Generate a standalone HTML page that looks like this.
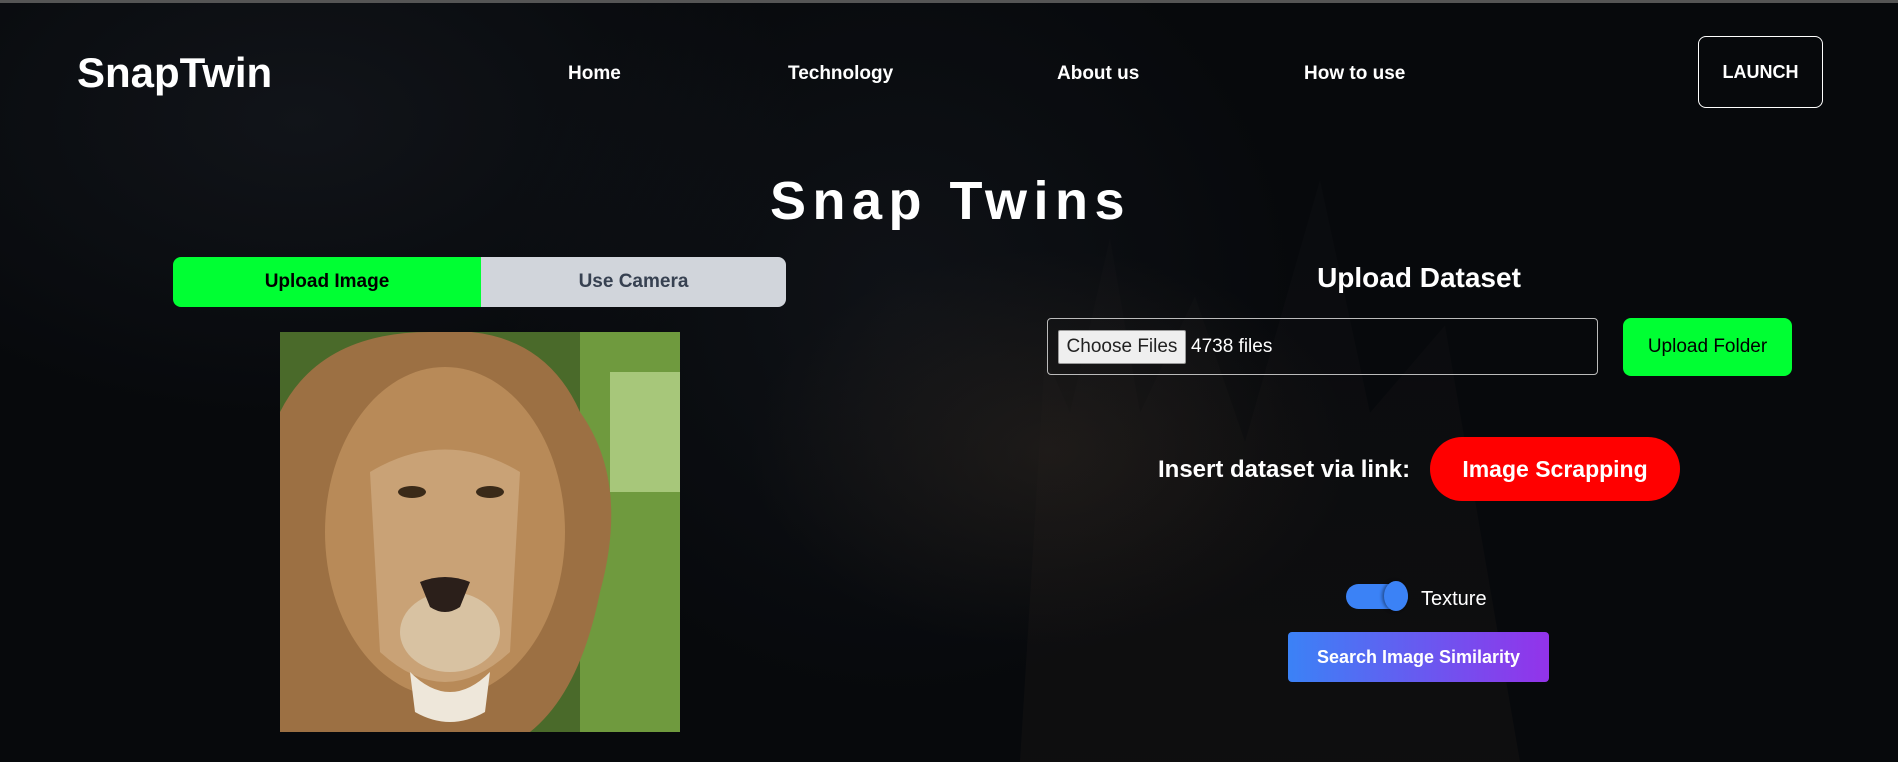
<!DOCTYPE html>
<html><head><meta charset="utf-8"><style>
*{margin:0;padding:0;box-sizing:border-box}
body{width:1898px;height:762px;overflow:hidden;font-family:"Liberation Sans",sans-serif;color:#fff;position:relative;
background:radial-gradient(ellipse 300px 200px at 1050px 450px,rgba(70,55,40,.3),transparent),
radial-gradient(ellipse 500px 300px at 300px 120px,rgba(40,45,55,.3),transparent),
radial-gradient(ellipse 400px 400px at 900px 300px,rgba(40,45,55,.25),transparent),#07090c;}
.a{position:absolute}
.c{display:flex;align-items:center;justify-content:center}
</style></head><body>
<div class="a" style="left:0;top:0;width:1898px;height:3px;background:#555"></div>
<div class="a" style="left:1020px;top:180px;width:500px;height:582px;background:linear-gradient(180deg,rgba(30,30,35,.12),rgba(45,35,28,.2));clip-path:polygon(0 100%,5% 30%,10% 40%,18% 10%,24% 40%,35% 20%,45% 45%,60% 0,70% 40%,85% 25%,100% 100%)"></div>
<div class="a" style="left:77px;top:49px;font-size:42px;font-weight:bold">SnapTwin</div>
<div class="a" style="left:568px;top:63px;font-size:19px;font-weight:bold">Home</div>
<div class="a" style="left:788px;top:63px;font-size:19px;font-weight:bold">Technology</div>
<div class="a" style="left:1057px;top:63px;font-size:19px;font-weight:bold">About us</div>
<div class="a" style="left:1304px;top:63px;font-size:19px;font-weight:bold">How to use</div>
<div class="a c" style="left:1698px;top:36px;width:125px;height:72px;border:1px solid #fff;border-radius:8px;font-size:18px;font-weight:bold">LAUNCH</div>
<div class="a" style="left:770px;top:170px;font-size:54px;font-weight:bold;letter-spacing:6.5px">Snap Twins</div>
<div class="a c" style="left:173px;top:257px;width:308px;height:50px;background:#00ff33;border-radius:8px 0 0 8px;color:#000;font-size:19px;font-weight:bold">Upload Image</div>
<div class="a c" style="left:481px;top:257px;width:305px;height:50px;background:#d1d5db;border-radius:0 8px 8px 0;color:#374151;font-size:19px;font-weight:bold">Use Camera</div>
<svg class="a" style="left:280px;top:332px" width="400" height="400" viewBox="0 0 400 400">
<rect width="400" height="400" fill="#4a6a2a"/>
<rect x="300" width="100" height="400" fill="#6f9a3e"/>
<rect x="330" y="40" width="70" height="120" fill="#a7c77a"/>
<path d="M0 400V80Q40 0 150 0Q260 -10 300 80Q350 150 320 260Q300 360 250 400Z" fill="#9c7043"/>
<ellipse cx="165" cy="200" rx="120" ry="165" fill="#b88a58"/>
<path d="M90 140Q165 95 240 140L230 320Q165 380 100 320Z" fill="#c9a276"/>
<ellipse cx="170" cy="300" rx="50" ry="40" fill="#d8c2a2"/>
<path d="M140 250Q165 240 190 250L180 275Q165 285 150 275Z" fill="#2b1f1a"/>
<ellipse cx="132" cy="160" rx="14" ry="6" fill="#3a2a18"/>
<ellipse cx="210" cy="160" rx="14" ry="6" fill="#3a2a18"/>
<path d="M130 340Q170 380 210 340L205 380Q170 400 135 380Z" fill="#eee7da"/>
</svg>
<div class="a" style="left:1309px;top:262px;width:220px;text-align:center;font-size:28px;font-weight:bold">Upload Dataset</div>
<div class="a" style="left:1047px;top:318px;width:551px;height:57px;border:1px solid #bbb;border-radius:4px"></div>
<div class="a c" style="left:1058px;top:330px;width:128px;height:34px;background:#efefef;border:1px solid #999;border-radius:2px;color:#222;font-size:19px">Choose Files</div>
<div class="a" style="left:1191px;top:336px;font-size:19px">4738 files</div>
<div class="a c" style="left:1623px;top:318px;width:169px;height:58px;background:#00ff33;border-radius:8px;color:#000;font-size:19px">Upload Folder</div>
<div class="a" style="left:1158px;top:456px;font-size:24px;font-weight:bold">Insert dataset via link:</div>
<div class="a c" style="left:1430px;top:437px;width:250px;height:64px;background:#ff0000;border-radius:32px;font-size:23px;font-weight:bold">Image Scrapping</div>
<div class="a" style="left:1346px;top:584px;width:62px;height:25px;background:#3b82f6;border-radius:13px"></div>
<div class="a" style="left:1384px;top:581px;width:24px;height:30px;background:#3b82f6;border-radius:50%;box-shadow:-2px 0 3px rgba(0,0,0,.4)"></div>
<div class="a" style="left:1421px;top:588px;font-size:20px">Texture</div>
<div class="a c" style="left:1288px;top:632px;width:261px;height:50px;background:linear-gradient(90deg,#3b82f6,#9333ea);border-radius:4px;font-size:18px;font-weight:bold">Search Image Similarity</div>
</body></html>
